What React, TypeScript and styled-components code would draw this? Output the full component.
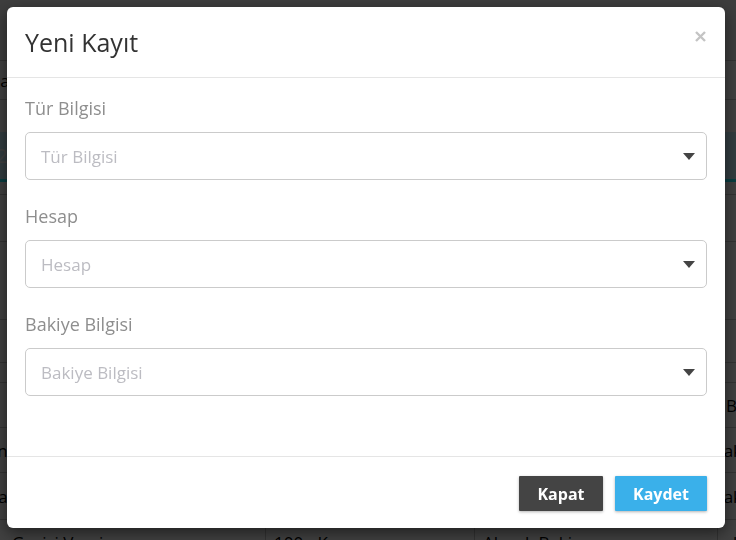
import React from 'react'
import styled, { createGlobalStyle } from 'styled-components'

const GlobalStyle = createGlobalStyle`
  html, body {
    margin: 0;
    padding: 0;
    width: 736px;
    height: 540px;
    overflow: hidden;
    background: #fff;
    font-family: 'Open Sans', 'Liberation Sans', sans-serif;
  }
  * {
    box-sizing: border-box;
  }
`

interface Row {
  height: number
  head?: boolean
  cells: string[]
}

const rows: Row[] = [
  { height: 13, cells: ['', '', '', ''] },
  { height: 47, cells: ['', '', '', ''] },
  { height: 78, cells: ['', '', '', ''] },
  { height: 43, cells: ['', '', '', ''] },
  { height: 20, cells: ['', '', '', ''] },
  { height: 45, head: true, cells: ['Tür', 'Hesap', 'Bakiye Bilgisi', 'Bakiye'] },
  { height: 45, cells: ['Kasadan Geçişi Vergi', '100 - Kasa', 'Alacak Bakiye', 'Alacak'] },
  { height: 47, cells: ['Kasa Transferi', '100 - Kasa', 'Alacak Bakiye', 'Alacak'] },
  { height: 45, cells: ['Kasadan Geçişi Vergi', '100 - Kasa', 'Alacak Bakiye', 'Alacak'] },
]

const colWidths = [326, 209, 243, 200]

const fields = ['Tür Bilgisi', 'Hesap', 'Bakiye Bilgisi']

const Caret: React.FC = () => (
  <svg width="12" height="7" viewBox="0 0 12 7">
    <polygon points="0,0 12,0 6,7" fill="#444" />
  </svg>
)

const CloseIcon: React.FC = () => (
  <svg width="11" height="11" viewBox="0 0 11 11">
    <path d="M1 1 L10 10 M10 1 L1 10" stroke="#c4c4c4" strokeWidth="2.4" />
  </svg>
)

const App: React.FC = () => {
  return (
    <>
      <GlobalStyle />
      <Page>
        <TopBar />
        <Crumbs>
          <CrumbText>Ana Sayfa / Muhasebe / Bakiye Tanımları</CrumbText>
        </Crumbs>
        <Spacer />
        <Band>
          <BandText>2</BandText>
        </Band>
        <Table>
          {rows.map((row, i) => (
            <TableRow key={i} style={{ height: row.height }}>
              {row.cells.map((cell, j) => (
                <Cell key={j} $col={j} $head={!!row.head}>
                  {cell}
                </Cell>
              ))}
            </TableRow>
          ))}
        </Table>
      </Page>

      <Backdrop>
        <Modal>
          <Header>
            <Title>Yeni Kayıt</Title>
            <CloseButton aria-label="Kapat">
              <CloseIcon />
            </CloseButton>
          </Header>
          <Body>
            {fields.map((f) => (
              <Group key={f}>
                <Label>{f}</Label>
                <Select>
                  <Placeholder>{f}</Placeholder>
                  <Caret />
                </Select>
              </Group>
            ))}
          </Body>
          <Footer>
            <Button $variant="dark">Kapat</Button>
            <Button $variant="primary">Kaydet</Button>
          </Footer>
        </Modal>
      </Backdrop>
    </>
  )
}

const Page = styled.div`
  width: 736px;
  height: 540px;
  overflow: hidden;
  color: #000;
  font-size: 16px;
`

const TopBar = styled.div`
  height: 60px;
  background: #f2f2f2;
`

const Crumbs = styled.div`
  height: 40px;
  display: flex;
  align-items: center;
  border-bottom: 1px solid #c8c8c8;
  border-top: 1px solid #c8c8c8;
`

const CrumbText = styled.span`
  margin-left: -44px;
  white-space: nowrap;
  font-size: 17px;
`

const Spacer = styled.div`
  height: 32px;
`

const Band = styled.div`
  height: 50px;
  background: #c8f0ff;
  border-bottom: 3px solid #28f0ff;
  display: flex;
  align-items: center;
`

const BandText = styled.span`
  margin-left: -4px;
  font-size: 20px;
  color: #fff;
`

const Table = styled.div`
  margin-left: -60px;
  width: 1000px;
`

const TableRow = styled.div`
  display: flex;
  border-bottom: 1px solid #c8c8c8;
`

const Cell = styled.div<{ $col: number; $head: boolean }>`
  flex: 0 0 ${(p) => colWidths[p.$col]}px;
  padding: 0 8px;
  padding-left: ${(p) => (p.$col === 0 ? 0 : p.$col === 3 && !p.$head ? 0 : 8)}px;
  text-indent: ${(p) => (p.$col === 3 && !p.$head ? -27 : 0)}px;
  display: flex;
  align-items: center;
  white-space: nowrap;
  overflow: hidden;
  font-size: 17px;
  border-right: ${(p) => (p.$col < 3 ? '1px solid #c8c8c8' : 'none')};
`

const Backdrop = styled.div`
  position: fixed;
  inset: 0;
  background: rgba(0, 0, 0, 0.75);
  padding: 7px 0 0 7px;
`

const Modal = styled.div`
  width: 718px;
  background: #fff;
  border-radius: 6px;
  box-shadow: 0 5px 15px rgba(0, 0, 0, 0.5);
  display: flex;
  flex-direction: column;
`

const Header = styled.div`
  height: 71px;
  border-bottom: 1px solid #e5e5e5;
  display: flex;
  align-items: flex-start;
  justify-content: space-between;
  padding: 19px 19px 0 18px;
`

const Title = styled.h4`
  margin: 0;
  font-size: 25px;
  font-weight: 400;
  line-height: 32px;
  color: #333;
`

const CloseButton = styled.button`
  border: 0;
  background: none;
  padding: 0;
  margin-top: 5px;
  display: flex;
  cursor: pointer;
`

const Body = styled.div`
  padding: 18px 18px 60px;
  display: flex;
  flex-direction: column;
  gap: 24px;
`

const Group = styled.div`
  display: flex;
  flex-direction: column;
  gap: 12px;
`

const Label = styled.label`
  font-size: 18px;
  line-height: 24px;
  color: #8e8e8e;
`

const Select = styled.div`
  height: 48px;
  border: 1px solid #cbcbcb;
  border-radius: 5px;
  display: flex;
  align-items: center;
  justify-content: space-between;
  padding: 0 11px 0 15px;
`

const Placeholder = styled.span`
  font-size: 17px;
  color: #bcbcc2;
`

const Footer = styled.div`
  border-top: 1px solid #e5e5e5;
  padding: 19px 18px 17px;
  display: flex;
  justify-content: flex-end;
  gap: 12px;
`

const Button = styled.button<{ $variant: 'dark' | 'primary' }>`
  height: 35px;
  width: ${(p) => (p.$variant === 'dark' ? 84 : 92)}px;
  border: 0;
  border-radius: 1px;
  font-family: 'Open Sans', 'Liberation Sans', sans-serif;
  font-size: 16px;
  font-weight: 700;
  color: #fff;
  background: ${(p) => (p.$variant === 'dark' ? '#444444' : '#3ab0ea')};
  box-shadow: 0 1px 3px rgba(0, 0, 0, 0.3);
  cursor: pointer;
`

export default App
